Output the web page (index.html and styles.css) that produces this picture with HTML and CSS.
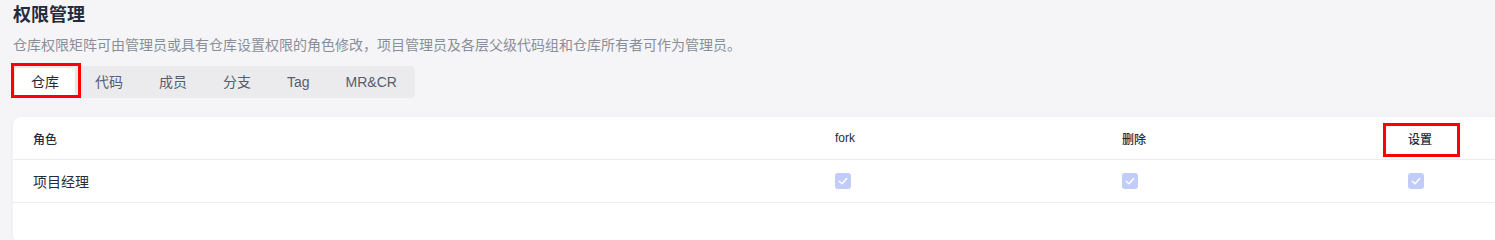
FILE: index.html
```html
<!DOCTYPE html>
<html lang="zh-CN">
<head>
<meta charset="utf-8">
<title>权限管理</title>
<link rel="stylesheet" href="styles.css">
</head>
<body>
<div class="page">
  <h1 class="title">权限管理</h1>
  <p class="desc">仓库权限矩阵可由管理员或具有仓库设置权限的角色修改，项目管理员及各层父级代码组和仓库所有者可作为管理员。</p>
  <div class="tabs">
    <div class="tab active">仓库<span class="mark mark-tab"></span></div>
    <div class="tab">代码</div>
    <div class="tab">成员</div>
    <div class="tab">分支</div>
    <div class="tab">Tag</div>
    <div class="tab">MR&amp;CR</div>
  </div>
  <div class="card">
    <div class="row head">
      <div class="cell">角色</div>
      <div class="cell">fork</div>
      <div class="cell">删除</div>
      <div class="cell">设置<span class="mark mark-head"></span></div>
      <div class="cell"></div>
    </div>
    <div class="row">
      <div class="cell role">项目经理</div>
      <div class="cell"><svg class="cb" viewBox="0 0 16 16" width="16" height="16"><rect width="16" height="16" rx="3" fill="#c2ccf9"/><path d="M4.3 8.3 L7 10.8 L11.7 5.6" fill="none" stroke="#fff" stroke-width="1.5" stroke-linecap="round" stroke-linejoin="round"/></svg></div>
      <div class="cell"><svg class="cb" viewBox="0 0 16 16" width="16" height="16"><rect width="16" height="16" rx="3" fill="#c2ccf9"/><path d="M4.3 8.3 L7 10.8 L11.7 5.6" fill="none" stroke="#fff" stroke-width="1.5" stroke-linecap="round" stroke-linejoin="round"/></svg></div>
      <div class="cell"><svg class="cb" viewBox="0 0 16 16" width="16" height="16"><rect width="16" height="16" rx="3" fill="#c2ccf9"/><path d="M4.3 8.3 L7 10.8 L11.7 5.6" fill="none" stroke="#fff" stroke-width="1.5" stroke-linecap="round" stroke-linejoin="round"/></svg></div>
      <div class="cell"></div>
    </div>
  </div>
</div>
</body>
</html>
```
FILE: styles.css
```css
html, body {
  margin: 0;
  padding: 0;
  overflow: hidden;
  background: #f5f5f7;
}
body {
  font-family: "Liberation Sans", "Noto Sans CJK SC", sans-serif;
  color: #252b3a;
}
.page {
  padding: 3px 0 0 13px;
}
.title {
  margin: 0;
  font-size: 18px;
  line-height: 24px;
  font-weight: 700;
  color: #252b3a;
}
.desc {
  margin: 7px 0 0;
  font-size: 14px;
  line-height: 22px;
  color: #8a8e99;
}
.tabs {
  display: inline-flex;
  gap: 4px;
  margin-top: 10px;
  padding: 2px;
  background: #ebebee;
  border-radius: 4px;
}
.tab {
  position: relative;
  height: 28px;
  line-height: 28px;
  padding: 0 16px;
  font-size: 14px;
  color: #575d6c;
  border-radius: 3px;
  white-space: nowrap;
}
.tab.active {
  background: #fff;
  color: #252b3a;
  box-shadow: 0 1px 3px rgba(0,0,0,.06);
}
.mark {
  position: absolute;
  border: 3px solid #ff0000;
  box-sizing: border-box;
  pointer-events: none;
}
.mark-tab {
  left: -4px;
  top: -5px;
  width: 70px;
  height: 35px;
}
.mark-head {
  left: -5px;
  top: 6px;
  width: 77px;
  height: 34px;
}
.card {
  margin-top: 19px;
  width: 1540px;
  padding-bottom: 40px;
  background: #fff;
  border-radius: 8px;
  box-shadow: 0 1px 4px rgba(0,0,0,.05);
}
.row {
  display: grid;
  grid-template-columns: 802px 287px 286px 287px 1fr;
  height: 42px;
  border-bottom: 1px solid #ebecf1;
  align-items: center;
}
.cell {
  position: relative;
  padding: 0 20px;
  height: 100%;
  display: flex;
  align-items: center;
}
.head .cell {
  font-size: 12px;
  font-weight: 500;
  color: #252b3a;
}
.role {
  font-size: 14px;
  color: #252b3a;
}
.cb {
  display: block;
}
```
